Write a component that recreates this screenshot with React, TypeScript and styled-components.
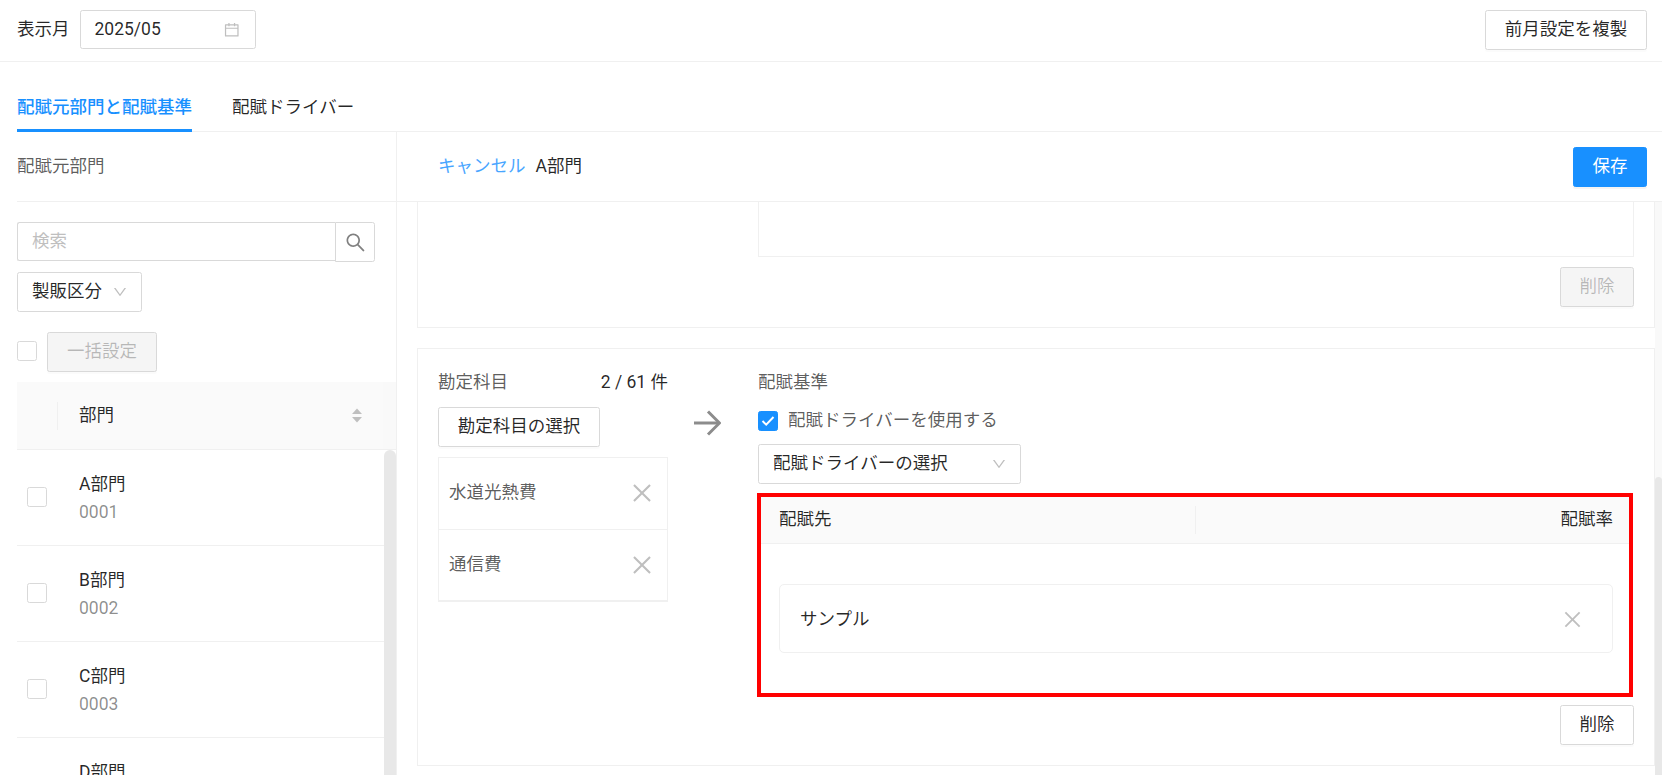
import React from "react";
import styled, { createGlobalStyle } from "styled-components";
import { AiOutlineCalendar, AiOutlineClose, AiOutlineDown, AiOutlineSearch } from "react-icons/ai";

const GlobalStyle = createGlobalStyle`
  html, body { margin: 0; height: 100%; background: #fff; }
  body {
    font-family: Roboto, "Noto Sans CJK JP", sans-serif;
    font-size: 17.5px;
    line-height: 27.5px;
    color: rgba(0, 0, 0, 0.85);
  }
  * { box-sizing: border-box; }
`;

const Page = styled.div`
  display: flex;
  flex-direction: column;
  height: 775px;
  overflow: hidden;
`;

const TopBar = styled.div`
  display: flex;
  align-items: flex-start;
  justify-content: space-between;
  height: 62px;
  padding: 10px 15px 0 17px;
  border-bottom: 1px solid #f0f0f0;
`;

const MonthField = styled.div`
  display: flex;
  align-items: center;
  gap: 10px;
`;

const DateBox = styled.div`
  display: flex;
  align-items: center;
  justify-content: space-between;
  width: 176px;
  height: 39px;
  padding: 0 14px;
  border: 1px solid #d9d9d9;
  border-radius: 2.5px;
  color: rgba(0, 0, 0, 0.85);
  svg { color: #bfbfbf; font-size: 17.5px; }
`;

const Button = styled.button<{ $width: number; $disabled?: boolean }>`
  display: flex;
  align-items: center;
  justify-content: center;
  width: ${(p) => p.$width}px;
  height: 40px;
  padding: 0;
  font: inherit;
  background: ${(p) => (p.$disabled ? "#f5f5f5" : "#fff")};
  color: ${(p) => (p.$disabled ? "rgba(0, 0, 0, 0.25)" : "rgba(0, 0, 0, 0.85)")};
  border: 1px solid #d9d9d9;
  border-radius: 2.5px;
  box-shadow: 0 2px 0 rgba(0, 0, 0, 0.015);
`;

const PrimaryButton = styled(Button)`
  background: #1890ff;
  border-color: #1890ff;
  color: #fff;
  box-shadow: 0 2px 0 rgba(0, 0, 0, 0.045);
`;

const Tabs = styled.div`
  display: flex;
  gap: 40px;
  height: 70px;
  margin-left: 17px;
  border-bottom: 1px solid #f0f0f0;
`;

const Tab = styled.div<{ $active?: boolean }>`
  height: 70px;
  padding-top: 32px;
  color: ${(p) => (p.$active ? "#1890ff" : "rgba(0, 0, 0, 0.85)")};
  font-weight: ${(p) => (p.$active ? 500 : 400)};
  border-bottom: 3px solid ${(p) => (p.$active ? "#1890ff" : "transparent")};
`;

const Body = styled.div`
  display: flex;
  flex: 1;
  min-height: 0;
  margin-left: 17px;
`;

const LeftPanel = styled.aside`
  display: flex;
  flex-direction: column;
  width: 380px;
  flex: none;
  border-right: 1px solid #f0f0f0;
`;

const PanelHead = styled.div`
  display: flex;
  align-items: center;
  flex: none;
  height: 70px;
  border-bottom: 1px solid #f0f0f0;
`;

const MutedTitle = styled.span`
  color: rgba(0, 0, 0, 0.65);
`;

const Filters = styled.div`
  display: flex;
  flex-direction: column;
  flex: none;
  padding-top: 20px;
`;

const SearchRow = styled.div`
  display: flex;
  align-items: flex-start;
  width: 358px;
`;

const SearchInput = styled.div`
  flex: 1;
  height: 39px;
  padding: 5px 14px;
  border: 1px solid #d9d9d9;
  border-right: 0;
  border-radius: 2.5px 0 0 2.5px;
  color: #bfbfbf;
`;

const SearchButton = styled.div`
  display: flex;
  align-items: center;
  justify-content: center;
  width: 40px;
  height: 40px;
  border: 1px solid #d9d9d9;
  border-radius: 0 2.5px 2.5px 0;
  color: #808080;
  font-size: 23px;
`;

const SelectBox = styled.div<{ $width: number }>`
  display: flex;
  align-items: center;
  justify-content: space-between;
  width: ${(p) => p.$width}px;
  height: 40px;
  padding: 0 13px 0 14px;
  border: 1px solid #d9d9d9;
  border-radius: 2.5px;
  svg { color: #bfbfbf; font-size: 16px; }
`;

const DeptSelect = styled(SelectBox)`
  margin-top: 10px;
`;

const BulkRow = styled.div`
  display: flex;
  align-items: center;
  gap: 10px;
  margin: 20px 0 10px;
`;

const Box = styled.span<{ $checked?: boolean }>`
  display: flex;
  align-items: center;
  justify-content: center;
  flex: none;
  width: 20px;
  height: 20px;
  background: ${(p) => (p.$checked ? "#1890ff" : "#fff")};
  border: 1px solid ${(p) => (p.$checked ? "#1890ff" : "#d9d9d9")};
  border-radius: 2.5px;
`;

const BulkBox = styled(Box)`
  margin-bottom: 2px;
`;

const TableHead = styled.div`
  display: flex;
  flex: none;
  height: 68px;
  background: #fafafa;
  border-bottom: 1px solid #f0f0f0;
`;

const TableHeadCell = styled.div`
  display: flex;
  align-items: center;
  flex: 1;
  padding: 0 21px 0 40px;
  &::before {
    content: "";
    width: 1px;
    height: 28px;
    margin-right: 21px;
    background: #f0f0f0;
  }
  span { flex: 1; }
`;

const HeadGutter = styled.div`
  flex: none;
  width: 13px;
  background: #f9f9f9;
`;

const ListArea = styled.div`
  display: flex;
  flex: 1;
  min-height: 0;
  overflow: hidden;
`;

const DeptList = styled.div`
  flex: 1;
`;

const DeptRow = styled.div`
  display: flex;
  align-items: center;
  gap: 32px;
  height: 96px;
  padding: 0 0 2px 10px;
  border-bottom: 1px solid #f0f0f0;
`;

const DeptText = styled.div`
  display: flex;
  flex-direction: column;
  gap: 0.5px;
  padding-top: 5px;
`;

const DeptCode = styled.span`
  color: rgba(0, 0, 0, 0.45);
`;

const LeftThumb = styled.div`
  flex: none;
  width: 12px;
  background: #e8e8e8;
  border-radius: 6px 6px 0 0;
`;

const RightPanel = styled.main`
  display: flex;
  flex-direction: column;
  flex: 1;
  min-width: 0;
`;

const RightHead = styled(PanelHead)`
  justify-content: space-between;
  padding: 0 15px 0 41px;
`;

const HeadLeft = styled.div`
  display: flex;
  align-items: center;
  gap: 10px;
`;

const CancelLink = styled.span`
  color: #1890ff;
  opacity: 0.8;
`;

const ScrollArea = styled.div`
  display: flex;
  flex: 1;
  min-height: 0;
`;

const Cards = styled.div`
  flex: 1;
  padding-left: 20px;
`;

const TopCard = styled.section`
  display: flex;
  flex-direction: column;
  align-items: flex-end;
  padding: 0 20px 20px;
  border: 1px solid #f0f0f0;
  border-top: 0;
`;

const EmptyBox = styled.div`
  width: 876px;
  height: 55px;
  margin-bottom: 10px;
  border: 1px solid #f0f0f0;
  border-top: 0;
`;

const Card = styled.section`
  display: flex;
  margin-top: 20px;
  padding: 20px;
  border: 1px solid #f0f0f0;
`;

const AccountCol = styled.div`
  flex: none;
  width: 230px;
`;

const AccountHead = styled.div`
  display: flex;
  justify-content: space-between;
  margin-bottom: 10px;
`;

const AccountList = styled.div`
  margin-top: 10px;
  border: 1px solid #f0f0f0;
  border-bottom-width: 2px;
`;

const AccountRow = styled.div`
  display: flex;
  align-items: center;
  justify-content: space-between;
  height: 71px;
  padding: 0 12px 0 10px;
  color: rgba(0, 0, 0, 0.65);
  svg { color: #bfbfbf; font-size: 26px; }
  & + & { border-top: 1px solid #f0f0f0; }
`;

const ArrowCol = styled.div`
  flex: none;
  width: 90px;
  padding: 41px 0 0 26px;
  line-height: 0;
`;

const BasisCol = styled.div`
  display: flex;
  flex-direction: column;
  flex: 1;
  min-width: 0;
  margin-left: -1px;
`;

const BasisLabel = styled.div`
  padding-left: 1px;
  color: rgba(0, 0, 0, 0.65);
`;

const DriverCheck = styled.label`
  display: flex;
  align-items: center;
  gap: 10px;
  height: 20px;
  margin: 14px 0 13px 1px;
  color: rgba(0, 0, 0, 0.65);
`;

const DriverSelect = styled(SelectBox)`
  margin-left: 1px;
`;

const Highlight = styled.div`
  margin: 9px 1px 0 0;
  border: 4px solid #ff0000;
`;

const RateHead = styled.div`
  display: flex;
  align-items: center;
  justify-content: space-between;
  height: 47px;
  padding: 0 16px 0 18px;
  background: #fafafa;
  border-bottom: 1px solid #f0f0f0;
`;

const RateHeadFirst = styled.div`
  display: flex;
  align-items: center;
  justify-content: space-between;
  width: 417px;
  &::after {
    content: "";
    width: 1px;
    height: 28px;
    background: #f0f0f0;
  }
`;

const RateBody = styled.div`
  padding: 40px 16px 40px 18px;
`;

const RateItem = styled.div`
  display: flex;
  align-items: center;
  justify-content: space-between;
  height: 69px;
  padding: 3px 28px 0 20px;
  border: 1px solid #f0f0f0;
  border-radius: 5px;
  svg { color: #bfbfbf; font-size: 23px; }
`;

const RowEnd = styled.div`
  display: flex;
  justify-content: flex-end;
  margin-top: 8px;
`;

const RightTrack = styled.div`
  display: flex;
  flex-direction: column;
  flex: none;
  width: 7px;
  padding-top: 275px;
  background: #f9f9f9;
`;

const RightThumb = styled.div`
  flex: 1;
  background: #e8e8e8;
  border-radius: 6px 6px 0 0;
`;

const SortIcon = () => (
  <svg width="10" height="15" viewBox="0 0 10 15" fill="#bfbfbf">
    <path d="M5 0.5 L10 6 H0 Z" />
    <path d="M5 14.5 L10 9 H0 Z" />
  </svg>
);

const CheckIcon = () => (
  <svg width="14" height="12" viewBox="0 0 14 12" fill="none" stroke="#fff" strokeWidth="2">
    <path d="M1.5 6 L5.2 9.6 L12.5 2" />
  </svg>
);

const ArrowIcon = () => (
  <svg width="27" height="26" viewBox="0 0 27 26" fill="none" stroke="#8c8c8c" strokeWidth="3">
    <path d="M0 13 H25" />
    <path d="M14 1.5 L25.5 13 L14 24.5" />
  </svg>
);

const departments = [
  { name: "A部門", code: "0001" },
  { name: "B部門", code: "0002" },
  { name: "C部門", code: "0003" },
  { name: "D部門", code: "0004" },
];

const accounts = ["水道光熱費", "通信費"];

export default function App() {
  return (
    <Page>
      <GlobalStyle />
      <TopBar>
        <MonthField>
          <span>表示月</span>
          <DateBox>
            2025/05
            <AiOutlineCalendar />
          </DateBox>
        </MonthField>
        <Button $width={162}>前月設定を複製</Button>
      </TopBar>
      <Tabs>
        <Tab $active>配賦元部門と配賦基準</Tab>
        <Tab>配賦ドライバー</Tab>
      </Tabs>
      <Body>
        <LeftPanel>
          <PanelHead>
            <MutedTitle>配賦元部門</MutedTitle>
          </PanelHead>
          <Filters>
            <SearchRow>
              <SearchInput>検索</SearchInput>
              <SearchButton>
                <AiOutlineSearch />
              </SearchButton>
            </SearchRow>
            <DeptSelect $width={125}>
              製販区分
              <AiOutlineDown />
            </DeptSelect>
            <BulkRow>
              <BulkBox />
              <Button $width={110} $disabled>一括設定</Button>
            </BulkRow>
          </Filters>
          <TableHead>
            <TableHeadCell>
              <span>部門</span>
              <SortIcon />
            </TableHeadCell>
            <HeadGutter />
          </TableHead>
          <ListArea>
            <DeptList>
              {departments.map((d) => (
                <DeptRow key={d.code}>
                  <Box />
                  <DeptText>
                    <span>{d.name}</span>
                    <DeptCode>{d.code}</DeptCode>
                  </DeptText>
                </DeptRow>
              ))}
            </DeptList>
            <LeftThumb />
          </ListArea>
        </LeftPanel>
        <RightPanel>
          <RightHead>
            <HeadLeft>
              <CancelLink>キャンセル</CancelLink>
              <span>A部門</span>
            </HeadLeft>
            <PrimaryButton $width={74}>保存</PrimaryButton>
          </RightHead>
          <ScrollArea>
            <Cards>
              <TopCard>
                <EmptyBox />
                <Button $width={74} $disabled>削除</Button>
              </TopCard>
              <Card>
                <AccountCol>
                  <AccountHead>
                    <MutedTitle>勘定科目</MutedTitle>
                    <span>2 / 61 件</span>
                  </AccountHead>
                  <Button $width={162}>勘定科目の選択</Button>
                  <AccountList>
                    {accounts.map((a) => (
                      <AccountRow key={a}>
                        {a}
                        <AiOutlineClose />
                      </AccountRow>
                    ))}
                  </AccountList>
                </AccountCol>
                <ArrowCol>
                  <ArrowIcon />
                </ArrowCol>
                <BasisCol>
                  <BasisLabel>配賦基準</BasisLabel>
                  <DriverCheck>
                    <Box $checked>
                      <CheckIcon />
                    </Box>
                    配賦ドライバーを使用する
                  </DriverCheck>
                  <DriverSelect $width={263}>
                    配賦ドライバーの選択
                    <AiOutlineDown />
                  </DriverSelect>
                  <Highlight>
                    <RateHead>
                      <RateHeadFirst>配賦先</RateHeadFirst>
                      <span>配賦率</span>
                    </RateHead>
                    <RateBody>
                      <RateItem>
                        サンプル
                        <AiOutlineClose />
                      </RateItem>
                    </RateBody>
                  </Highlight>
                  <RowEnd>
                    <Button $width={74}>削除</Button>
                  </RowEnd>
                </BasisCol>
              </Card>
            </Cards>
            <RightTrack>
              <RightThumb />
            </RightTrack>
          </ScrollArea>
        </RightPanel>
      </Body>
    </Page>
  );
}
